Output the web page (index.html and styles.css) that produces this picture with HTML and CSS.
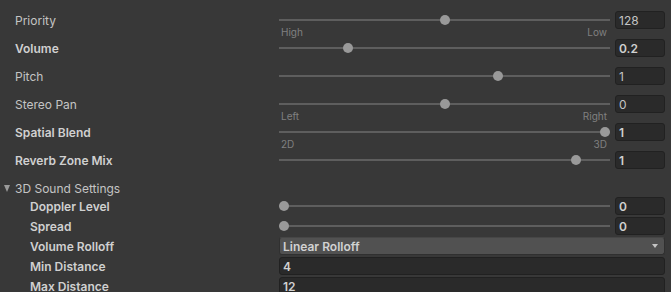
FILE: index.html
```html
<!DOCTYPE html>
<html>
<head>
<meta charset="utf-8">
<link rel="stylesheet" href="styles.css">
</head>
<body>
<div class="inspector">
  <div class="row">
    <span class="label">Priority</span>
    <div class="slider" style="--p:0.5">
      <div class="track"></div><div class="thumb"></div>
      <div class="ends"><span>High</span><span>Low</span></div>
    </div>
    <div class="field">128</div>
  </div>
  <div class="row">
    <span class="label bold">Volume</span>
    <div class="slider" style="--p:0.2">
      <div class="track"></div><div class="thumb"></div>
    </div>
    <div class="field bold">0.2</div>
  </div>
  <div class="row">
    <span class="label">Pitch</span>
    <div class="slider" style="--p:0.6667">
      <div class="track"></div><div class="thumb"></div>
    </div>
    <div class="field">1</div>
  </div>
  <div class="row">
    <span class="label">Stereo Pan</span>
    <div class="slider" style="--p:0.5">
      <div class="track"></div><div class="thumb"></div>
      <div class="ends"><span>Left</span><span>Right</span></div>
    </div>
    <div class="field">0</div>
  </div>
  <div class="row">
    <span class="label bold">Spatial Blend</span>
    <div class="slider" style="--p:1">
      <div class="track"></div><div class="thumb"></div>
      <div class="ends"><span>2D</span><span>3D</span></div>
    </div>
    <div class="field bold">1</div>
  </div>
  <div class="row">
    <span class="label bold">Reverb Zone Mix</span>
    <div class="slider" style="--p:0.909">
      <div class="track"></div><div class="thumb"></div>
    </div>
    <div class="field bold">1</div>
  </div>

  <div class="foldout">
    <span class="arrow"></span>
    <span>3D Sound Settings</span>
  </div>

  <div class="sub">
    <div class="subrow">
      <span class="label bold">Doppler Level</span>
      <div class="slider" style="--p:0">
        <div class="track"></div><div class="thumb"></div>
      </div>
      <div class="field bold">0</div>
    </div>
    <div class="subrow">
      <span class="label bold">Spread</span>
      <div class="slider" style="--p:0">
        <div class="track"></div><div class="thumb"></div>
      </div>
      <div class="field bold">0</div>
    </div>
    <div class="subrow">
      <span class="label bold">Volume Rolloff</span>
      <div class="dropdown bold"><span>Linear Rolloff</span><span class="caret"></span></div>
    </div>
    <div class="subrow">
      <span class="label bold">Min Distance</span>
      <div class="field wide bold">4</div>
    </div>
    <div class="subrow">
      <span class="label bold">Max Distance</span>
      <div class="field wide bold">12</div>
    </div>
  </div>
</div>
</body>
</html>
```

FILE: styles.css
```css
html, body {
  margin: 0;
  padding: 0;
  background: #383838;
}

body {
  width: 671px;
  height: 292px;
  overflow: hidden;
  font-family: Inter, "Noto Sans", sans-serif;
  font-size: 12px;
  color: #c4c4c4;
}

.inspector {
  padding: 11px 6px 0 0;
}

.row {
  display: grid;
  grid-template-columns: 274px 331px 50px;
  column-gap: 5px;
  height: 28px;
  align-items: start;
}

.label {
  display: block;
  height: 18px;
  line-height: 20px;
  padding-left: 15px;
  white-space: nowrap;
}

.bold {
  font-weight: 600;
  color: #d0d0d0;
}

.slider {
  position: relative;
  height: 18px;
}

.track {
  position: absolute;
  left: 0;
  right: 0;
  top: 8px;
  height: 2px;
  background: #5e5e5e;
}

.thumb {
  position: absolute;
  top: 4px;
  left: calc(var(--p) * (100% - 10px));
  width: 10px;
  height: 10px;
  border-radius: 50%;
  background: #999999;
}

.ends {
  position: absolute;
  left: 2px;
  right: 3px;
  top: 15px;
  display: flex;
  justify-content: space-between;
  font-size: 10px;
  line-height: 12px;
  color: #808080;
}

.field {
  box-sizing: border-box;
  height: 18px;
  line-height: 17px;
  padding-left: 3px;
  background: #2a2a2a;
  border: 1px solid #212121;
  border-radius: 3px;
  white-space: nowrap;
}

.foldout {
  display: flex;
  align-items: center;
  height: 18px;
  padding-left: 4px;
  gap: 5px;
}

.arrow {
  width: 0;
  height: 0;
  border-left: 3.5px solid transparent;
  border-right: 3.5px solid transparent;
  border-top: 7px solid #9a9a9a;
}

.subrow {
  display: grid;
  grid-template-columns: 274px 331px 50px;
  column-gap: 5px;
  height: 20px;
  align-items: start;
}

.subrow .label {
  padding-left: 30px;
}

.subrow .field.wide,
.subrow .dropdown {
  grid-column: 2 / 4;
}

.dropdown {
  box-sizing: border-box;
  height: 18px;
  line-height: 17px;
  padding: 0 6px 0 3px;
  background: #515151;
  border: 1px solid #303030;
  border-top-color: #464646;
  border-radius: 3px;
  display: flex;
  justify-content: space-between;
  align-items: center;
  color: #d2d2d2;
}

.caret {
  width: 0;
  height: 0;
  border-left: 3.5px solid transparent;
  border-right: 3.5px solid transparent;
  border-top: 4px solid #c4c4c4;
}
```
